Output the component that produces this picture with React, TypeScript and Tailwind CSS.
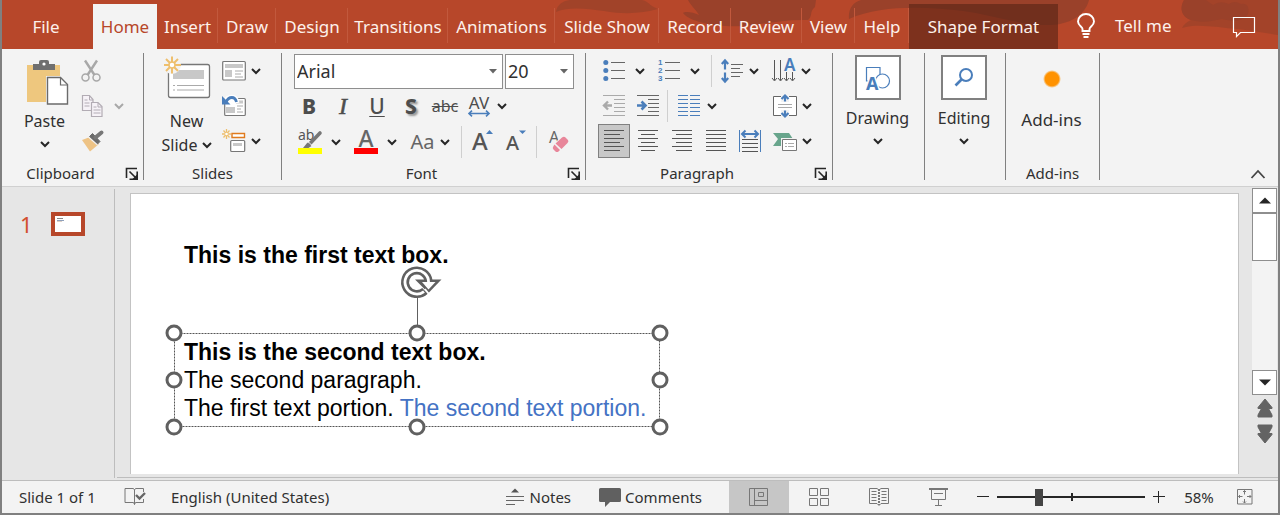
import type { ReactNode } from "react";

const INK = "#262626";
const GREY = "#6b6b6b";
const BLUE = "#4a7ebb";

function Svg({ w, h, children, className = "" }: { w: number; h: number; children: ReactNode; className?: string }) {
  return (
    <svg width={w} height={h} viewBox={`0 0 ${w} ${h}`} fill="none" className={`shrink-0 overflow-visible ${className}`} aria-hidden="true">
      {children}
    </svg>
  );
}

function Chevron({ color = INK, className = "" }: { color?: string; className?: string }) {
  return (
    <Svg w={12} h={10} className={className}>
      <path d="M2 3l4 4 4-4" stroke={color} strokeWidth="2" />
    </Svg>
  );
}

function More({ label, muted = false, className = "" }: { label: string; muted?: boolean; className?: string }) {
  return (
    <button type="button" aria-label={label} className={`shrink-0 ${className}`}>
      <Chevron color={muted ? "#a8a8a8" : INK} />
    </button>
  );
}

function Tool({ label, children, className = "" }: { label: string; children: ReactNode; className?: string }) {
  return (
    <button type="button" aria-label={label} className={`flex shrink-0 items-center justify-center ${className}`}>
      {children}
    </button>
  );
}

function Divider({ className = "" }: { className?: string }) {
  return <span className={`h-8 w-px shrink-0 bg-[#cfcfcf] ${className}`} />;
}

/* ---------- Tab bar ---------- */

const TABS = [
  { name: "Insert", width: "w-[61px]" },
  { name: "Draw", width: "w-[58px]" },
  { name: "Design", width: "w-[72px]" },
  { name: "Transitions", width: "w-[100px]" },
  { name: "Animations", width: "w-[107px]" },
  { name: "Slide Show", width: "w-[104px]" },
  { name: "Record", width: "w-[72px]" },
  { name: "Review", width: "w-[71px]" },
  { name: "View", width: "w-[53px]" },
  { name: "Help", width: "w-[54px]" },
];

function TabBar() {
  return (
    <header className="relative flex h-[49px] shrink-0 items-stretch bg-[#b7472a] text-[17px] text-[#fdf1ec]">
      <svg width="740" height="49" viewBox="540 0 740 49" className="absolute top-0 right-0" fill="#9a412a" aria-hidden="true">
        <path d="M572 0C564 1 559 5 558 12C572 6 590 9 606 11C628 15 645 13 660 9C650 5 652 2 644 0Z" opacity=".75" />
        <path d="M690 0C693 6 699 11 701 15C695 12 687 11 685 13C690 20 708 25 728 26C752 28 778 19 810 20C815 16 811 12 817 7L818 0Z" />
        <path d="M851 19C850 9 855 2 863 0L1091 0C1088 12 1076 24 1053 25C1024 26 995 15 965 11C930 7 884 4 851 19Z" />
        <path d="M1186 0C1181 9 1184 17 1193 20C1189 22 1186 24 1184 28C1200 23 1221 28 1240 29C1255 31 1268 33 1280 35L1280 0Z" opacity=".7" />
        <path d="M1186 0C1181 9 1184 17 1193 20C1206 24 1217 20 1224 19C1244 24 1253 17 1250 7Q1248 3 1243 4Q1236 0 1231 4Q1222 0 1215 5L1208 0Z" />
      </svg>
      <nav className="relative flex items-stretch" aria-label="Ribbon tabs">
        <button type="button" className="w-[91px] pt-[5px] pr-[3px]">File</button>
        <button type="button" className="mt-1 w-16 bg-[#f3f3f3] pt-px text-[#b7472a]">Home</button>
        {TABS.map((t) => (
          <button type="button" key={t.name} className={`${t.width} relative pt-[5px] whitespace-nowrap`}>
            {t.name}
            <span className="absolute top-2 right-0 h-[35px] w-px bg-[#c2593d]" />
          </button>
        ))}
        <button type="button" className="mt-1 w-[149px] bg-[#56231699] pt-px whitespace-nowrap">Shape Format</button>
      </nav>
      <button type="button" className="relative ml-4 flex items-center gap-[17px] pt-[3px] whitespace-nowrap">
        <Svg w={24} h={24}>
          <path d="M8.500 17v-2c0-2-4.500-3.500-4.500-7.500a8 7.500 0 0 1 16 0c0 4-4.500 5.500-4.500 7.500v2zM8.500 20h7M9.500 23h5" stroke="#fff" strokeWidth="1.900" />
        </Svg>
        <span>Tell me</span>
      </button>
      <button type="button" aria-label="Comments pane" className="relative mr-[21px] ml-auto pt-1">
        <Svg w={26} h={22}>
          <path d="M2.500 1.500h21v15h-14l-4 4v-4h-3z" stroke="#fff" strokeWidth="1.200" />
        </Svg>
      </button>
    </header>
  );
}

/* ---------- Ribbon ---------- */

function Group({ label, width, launcher = false, children }: { label?: string; width: string; launcher?: boolean; children: ReactNode }) {
  return (
    <section className={`${width} flex shrink-0 flex-col border-r border-[#808080]`} aria-label={label}>
      <div className="h-[113px]">{children}</div>
      {label && (
        <div className="relative flex h-[14px] items-center justify-center text-[15px] leading-5">
          <span className={launcher ? "pr-6" : ""}>{label}</span>
          {launcher && (
            <button type="button" aria-label={`${label} settings`} className="absolute right-1 bottom-0">
              <Svg w={14} h={13}>
                <path d="M1.500 11V1.500H12" stroke={INK} strokeWidth="1.600" />
                <path d="M12.200 4.500v7.700H4.500M4.500 4.500l6 6" stroke={INK} strokeWidth="1.600" />
                <path d="M12.500 7v5.500H7z" fill={INK} />
              </Svg>
            </button>
          )}
        </div>
      )}
    </section>
  );
}

function Clipboard() {
  return (
    <Group label="Clipboard" width="w-[142px]" launcher>
      <div className="flex h-[107px]">
        <button type="button" className="flex w-[70px] flex-col items-center pl-[15px]">
          <Svg w={44} h={52} className="ml-1">
            <path d="M2 12h33v37H2z" fill="#eec77e" />
            <path d="M8 17v-6h6V9q0-2 2-2h6q2 0 2 2v2h6v6z" fill="#6f6f6f" />
            <circle cx="19" cy="11" r="1.600" fill="#fff" />
            <path d="M21 23h15l9 9v21H21z" fill="#f3f3f3" />
            <path d="M22.500 24.500h13l7 7V51h-20z" fill="#fff" stroke={GREY} strokeWidth="1.400" />
            <path d="M35.500 25v7h7" stroke={GREY} strokeWidth="1.200" />
          </Svg>
          <span className="mt-1 text-[16px] leading-6">Paste</span>
          <Chevron className="mt-[6px]" />
        </button>
        <div className="flex flex-1 flex-col pl-[9px]">
          <Tool label="Cut" className="h-[35px] w-5">
            <Svg w={20} h={24}>
              <path d="M4 1.500l9.500 14.500M16 1.500L6.500 16" stroke="#a8a8a8" strokeWidth="2.400" />
              <circle cx="4.500" cy="18.500" r="3.500" stroke="#a8a8a8" strokeWidth="1.500" />
              <circle cx="15.500" cy="18.500" r="3.500" stroke="#a8a8a8" strokeWidth="1.500" />
            </Svg>
          </Tool>
          <div className="flex h-[35px] items-center gap-[10px]">
            <Tool label="Copy">
              <Svg w={22} h={24}>
                <path d="M1.500 1.500h7l3.500 4v11H1.500z" fill="#f6f2f7" stroke="#b2acb4" strokeWidth="1.200" />
                <path d="M8.500 2v4h3.500M3.500 6h3M3.500 9h5M3.500 12h5" stroke="#b2acb4" />
                <path d="M10.500 8.500h6.500l4 4v10H10.500z" fill="#f6f2f7" stroke="#b2acb4" strokeWidth="1.200" />
                <path d="M17 9v4h4M12.500 13h3M12.500 16h7M12.500 19h7" stroke="#b2acb4" />
              </Svg>
            </Tool>
            <More label="Copy options" muted />
          </div>
          <Tool label="Format Painter" className="h-[35px] w-6">
            <Svg w={24} h={22}>
              <path d="M1 10l8-3 9 7-9 7.500z" fill="#eec385" />
              <path d="M8.500 6.500l3-3 7.500 8-3 3z" fill={GREY} stroke={GREY} />
              <path d="M14.500 7.500l6-5" stroke="#777" strokeWidth="4" strokeLinecap="round" />
              <path d="M7.500 7l9 8" stroke="#f3f3f3" strokeWidth="1.200" />
            </Svg>
          </Tool>
        </div>
      </div>
    </Group>
  );
}

function Slides() {
  return (
    <Group label="Slides" width="w-[138px]">
      <div className="flex h-[107px]">
        <button type="button" className="flex w-[70px] flex-col items-center pl-[15px]">
          <Svg w={48} h={52}>
            <rect x="5.500" y="11.500" width="41" height="33" rx="2" fill="#fff" stroke="#777" strokeWidth="1.300" />
            <rect x="10" y="17" width="31" height="9" fill="#c8c8c8" />
            <path d="M10 32.500h2M14 32.500h27M10 37h2M14 37h27" stroke="#aaa" />
            <circle cx="9" cy="12" r="9" fill="#f3f3f3" />
            <path d="M9 3.500v17M1 12h17M3 6l12 12M15 6L3 18" stroke="#eebf6d" strokeWidth="2" />
            <circle cx="9" cy="12" r="3" fill="#fff" stroke="#eebf6d" strokeWidth="1.500" />
          </Svg>
          <span className="mt-1 text-[16px] leading-6">New</span>
          <span className="flex items-center gap-1 pl-[2px] text-[16px] leading-6">
            Slide <Chevron />
          </span>
        </button>
        <div className="flex flex-1 flex-col pl-2">
          <div className="flex h-[35px] items-center gap-1">
            <Tool label="Layout">
              <Svg w={24} h={22}>
                <rect x=".7" y="1.500" width="22.600" height="18.500" rx="1" fill="#fff" stroke="#777" strokeWidth="1.200" />
                <path d="M3 4h18v4H3zM3 10h7v7H3z" fill="#c8c8c8" />
                <path d="M13 11h8M13 14h6M13 17h8" stroke="#aaa" />
              </Svg>
            </Tool>
            <More label="Layout options" />
          </div>
          <Tool label="Reset" className="h-[35px] w-6">
            <Svg w={24} h={24}>
              <rect x="2.700" y="4.500" width="20.600" height="17" rx="1" fill="#fff" stroke="#777" strokeWidth="1.200" />
              <path d="M14 6.500h7v3h-7zM4 13h9v6H4z" fill="#c8c8c8" />
              <path d="M15 12h6M15 15h4M15 18h6" stroke="#aaa" />
              <path d="M3 8C6 2 14 1 15 9" stroke="#fff" strokeWidth="5" />
              <path d="M4 8C7 2 13 2 14.500 8" stroke={BLUE} strokeWidth="2.800" />
              <path d="M0 2v8.500h8.500z" fill={BLUE} />
            </Svg>
          </Tool>
          <div className="flex h-[35px] items-center gap-1">
            <Tool label="Section">
              <Svg w={24} h={24}>
                <path d="M10 4.500h12.500v4H10z" fill="#fff" stroke="#e07b1f" strokeWidth="1.400" />
                <rect x="8.700" y="11.500" width="14" height="11" rx="1" fill="#fff" stroke="#777" strokeWidth="1.200" />
                <path d="M11 14h9v3h-9z" fill="#c8c8c8" />
                <path d="M4.500 0v10M0 5h9M1.500 1.500l6 7M7.500 1.500l-6 7" stroke="#eebf6d" strokeWidth="1.300" />
                <circle cx="4.500" cy="5" r="1.300" fill="#fff" />
              </Svg>
            </Tool>
            <More label="Section options" />
          </div>
        </div>
      </div>
    </Group>
  );
}

function Picker({ label, value, width }: { label: string; value: string; width: string }) {
  return (
    <div className="relative">
      <select aria-label={label} className={`${width} block h-[35px] appearance-none border border-[#8e8e8e] bg-white pl-[2px] outline-none`} defaultValue={value}>
        <option>{value}</option>
      </select>
      <Svg w={8} h={5} className="pointer-events-none absolute top-[15px] right-[6px]">
        <path d="M0 0h8L4 4.500z" fill="#666" />
      </Svg>
    </div>
  );
}

function Font() {
  return (
    <Group label="Font" width="w-[304px]" launcher>
      <div className="flex gap-[2px] pt-px pl-3 text-[18px]">
        <Picker label="Font name" value="Arial" width="w-[209px]" />
        <Picker label="Font size" value="20" width="w-[69px]" />
      </div>
      <div className="flex h-[34px] items-center pl-[10px] text-[21px] leading-6 text-[#4d4d4d]">
        <Tool label="Bold" className="w-[34px] font-extrabold">B</Tool>
        <Tool label="Italic" className="w-[34px] font-['Liberation_Serif'] text-[24px] italic">
          <span className="[-webkit-text-stroke:0.5px]">I</span>
        </Tool>
        <Tool label="Underline" className="w-[34px] font-medium underline decoration-1 underline-offset-2">U</Tool>
        <Tool label="Text Shadow" className="w-[34px] font-extrabold [text-shadow:2px_2px_2px_#999]">S</Tool>
        <Tool label="Strikethrough" className="w-[34px] text-[16px] line-through">abc</Tool>
        <Tool label="Character Spacing" className="w-[34px] flex-col">
          <span className="text-[17px] leading-[15px]">AV</span>
          <Svg w={22} h={7}>
            <path d="M1 3.500h20M4 .7L1 3.500l3 2.800M18 .7l3 2.800-3 2.800" stroke={BLUE} strokeWidth="1.600" />
          </Svg>
        </Tool>
        <More label="Spacing options" />
      </div>
      <div className="flex h-[37px] items-center pl-4 text-[#666]">
        <Tool label="Text Highlight Color">
          <Svg w={24} h={26}>
            <text x="0" y="11" fontSize="14" fontFamily="Noto Sans" fill="#555">ab</text>
            <path d="M22 4L12 14.500" stroke="#777" strokeWidth="3.600" strokeLinecap="round" />
            <path d="M9.500 13.500l4 3.500-3 2H5z" fill="#777" />
            <path d="M9.500 12l5 5" stroke="#f3f3f3" />
            <path d="M0 19h24v6H0z" fill="#ff0" />
          </Svg>
        </Tool>
        <More label="Highlight options" className="ml-2" />
        <Tool label="Font Color" className="ml-3">
          <Svg w={24} h={26}>
            <text x="12" y="18" fontSize="23" textAnchor="middle" fontFamily="Noto Sans" fontWeight="500" fill="#666">A</text>
            <path d="M0 19h24v6H0z" fill="red" />
          </Svg>
        </Tool>
        <More label="Color options" className="ml-2" />
        <Tool label="Change Case" className="ml-3 w-[25px] text-[20px]">Aa</Tool>
        <More label="Case options" className="ml-1" />
        <Divider className="ml-[10px]" />
        <Tool label="Increase Font Size" className="ml-[10px]">
          <Svg w={22} h={26}>
            <text x="0" y="21" fontSize="24" fontFamily="Noto Sans" fontWeight="500" fill="#555">A</text>
            <path d="M14 5h7l-3.500-4z" fill={BLUE} />
          </Svg>
        </Tool>
        <Tool label="Decrease Font Size" className="ml-3">
          <Svg w={22} h={26}>
            <text x="0" y="21" fontSize="20" fontFamily="Noto Sans" fontWeight="500" fill="#555">A</text>
            <path d="M13 1.500h7L16.500 5z" fill={BLUE} />
          </Svg>
        </Tool>
        <Divider className="ml-[8px]" />
        <Tool label="Clear Formatting" className="ml-3">
          <Svg w={22} h={26}>
            <text x="0" y="14" fontSize="16" fontFamily="Noto Sans" fill="#666">A</text>
            <path d="M3 18L13 6l8 6-10 13z" fill="#f3f3f3" />
            <path d="M6.500 14.500l6.500-6q2-1.500 3.500 0l2.500 2.500q1 1.500-.5 3l-6 6zM5.500 15.500l5.500 5.500-1.500 1.500q-1.500 1-3 0l-2-2q-1.500-1.500 0-3.500z" fill="#e8869a" />
          </Svg>
        </Tool>
      </div>
    </Group>
  );
}

function Lines({ rows, color = "#555" }: { rows: number[][]; color?: string }) {
  return (
    <Svg w={22} h={22}>
      <path d={rows.map(([y, x1, x2]) => `M${x1} ${y}.5H${x2}`).join("")} stroke={color} strokeWidth="1.200" />
    </Svg>
  );
}

function Paragraph() {
  return (
    <Group label="Paragraph" width="w-[247px]" launcher>
      <div className="flex h-9 items-center pl-[17px]">
        <Tool label="Bullets">
          <Svg w={22} h={22}>
            <path d="M8 2.500h14M8 10.500h14M8 18.500h14" stroke="#666" />
            <circle cx="2.800" cy="2.500" r="2.500" fill={BLUE} />
            <circle cx="2.800" cy="10.500" r="2.500" fill={BLUE} />
            <circle cx="2.800" cy="18.500" r="2.500" fill={BLUE} />
          </Svg>
        </Tool>
        <More label="Bullet options" className="ml-[9px]" />
        <Tool label="Numbering" className="ml-3">
          <Svg w={22} h={22}>
            <path d="M7 2.500h15M7 10.500h15M7 18.500h15" stroke="#666" />
            <g fill={BLUE} fontSize="8" fontFamily="Liberation Sans" fontWeight="700">
              <text x="0" y="5">1</text>
              <text x="0" y="13">2</text>
              <text x="0" y="21">3</text>
            </g>
          </Svg>
        </Tool>
        <More label="Numbering options" className="ml-[9px]" />
        <Divider className="ml-[10px]" />
        <Tool label="Line Spacing" className="ml-[9px]">
          <Svg w={22} h={24}>
            <path d="M4 1.500v9M4 13.500v9M.8 5L4 1.500 7.200 5M.8 19L4 22.500 7.200 19" stroke={BLUE} strokeWidth="2.200" />
            <path d="M10 5.500h12M10 9.500h9M10 13.500h12M10 17.500h9" stroke="#666" />
          </Svg>
        </Tool>
        <More label="Spacing options" className="ml-[5px]" />
        <Tool label="Text Direction" className="ml-3">
          <Svg w={24} h={24}>
            <path d="M2.500 1v20M8.500 1v20M14.500 13v8M20.500 13v8M0 19l2.500 3 2.500-3M6 19l2.500 3 2.500-3M12 19l2.500 3 2.500-3M18 19l2.500 3 2.500-3" stroke="#555" />
            <text x="12" y="12" fontSize="17" fontFamily="Noto Sans" fontWeight="600" fill={BLUE}>A</text>
          </Svg>
        </Tool>
        <More label="Direction options" className="ml-1" />
      </div>
      <div className="flex h-[34px] items-center pl-[17px]">
        <Tool label="Decrease Indent">
          <Svg w={22} h={22}>
            <path d="M0 .5h22M11 4.500h11M11 8.500h11M11 12.500h11M11 16.500h11M0 20.500h22" stroke="#aaa" />
            <path d="M9 10.500H1M5 6.500l-4 4 4 4" stroke="#aaa" strokeWidth="2.400" />
          </Svg>
        </Tool>
        <Tool label="Increase Indent" className="ml-3">
          <Svg w={22} h={22}>
            <path d="M0 .5h22M11 4.500h11M11 8.500h11M11 12.500h11M11 16.500h11M0 20.500h22" stroke="#666" />
            <path d="M0 10.500h8M4.500 6.500l4 4-4 4" stroke={BLUE} strokeWidth="2.600" />
          </Svg>
        </Tool>
        <Divider className="ml-2" />
        <Tool label="Columns" className="ml-[10px]">
          <Svg w={22} h={22}>
            <path d="M0 .5h10M12 .5h10M0 4.500h10M12 4.500h10M0 8.500h10M12 8.500h10M0 12.500h10M12 12.500h10M0 16.500h10M12 16.500h10M0 20.500h10M12 20.500h10" stroke={BLUE} />
          </Svg>
        </Tool>
        <More label="Column options" className="ml-[6px]" />
        <Tool label="Align Text" className="ml-[55px]">
          <Svg w={24} h={24}>
            <path d="M.5 2.500h23v19H.500z" fill="#fff" stroke="#666" />
            <path d="M8 0h8v8H8zM8 16h8v8H8z" fill="#f3f3f3" />
            <path d="M5 10.500h14M5 13.500h14" stroke="#aaa" />
            <path d="M12 1.500v6M12 22.500v-6M8.500 5L12 1.500 15.500 5M8.500 19l3.500 3.500 3.500-3.500" stroke={BLUE} strokeWidth="2.200" />
          </Svg>
        </Tool>
        <More label="Align options" className="ml-1" />
      </div>
      <div className="flex h-[35px] items-center pl-[11px]">
        <Tool label="Align Left" className="mr-px ml-px h-[34px] w-8 border border-[#808080] bg-[#c8c8c8]">
          <Lines rows={[[0, 1, 21], [4, 1, 17], [8, 1, 21], [12, 1, 17], [16, 1, 21], [20, 1, 17]]} />
        </Tool>
        <Tool label="Center" className="w-[34px]">
          <Lines rows={[[0, 1, 21], [4, 4, 18], [8, 1, 21], [12, 4, 18], [16, 1, 21], [20, 4, 18]]} />
        </Tool>
        <Tool label="Align Right" className="w-[34px]">
          <Lines rows={[[0, 1, 21], [4, 5, 21], [8, 1, 21], [12, 5, 21], [16, 1, 21], [20, 5, 21]]} />
        </Tool>
        <Tool label="Justify" className="w-[34px]">
          <Lines rows={[[0, 1, 21], [4, 1, 21], [8, 1, 21], [12, 1, 21], [16, 1, 21], [20, 1, 21]]} />
        </Tool>
        <Tool label="Distribute" className="w-[34px]">
          <Svg w={22} h={24}>
            <path d="M.5 1v22M21.500 1v22" stroke={BLUE} />
            <path d="M3 5h16M6.500 1.500L3 5l3.500 3.500M15.500 1.500L19 5l-3.500 3.500" stroke={BLUE} strokeWidth="2" />
            <path d="M3 10.500h16M3 14.500h16M3 18.500h16M3 22.500h16" stroke="#555" />
          </Svg>
        </Tool>
        <Tool label="Convert to SmartArt" className="ml-[6px]">
          <Svg w={24} h={22}>
            <path d="M0 3h16l4 6-4 7H0l5-7z" fill="#68a58c" />
            <path d="M8 8h16v14H8z" fill="#f3f3f3" />
            <path d="M9.500 9.500h14v11h-14z" fill="#fff" stroke="#777" />
            <path d="M12 13.500h2M15 13.500h6M12 16.500h2M15 16.500h6" stroke="#aaa" />
          </Svg>
        </Tool>
        <More label="SmartArt options" className="ml-1" />
      </div>
    </Group>
  );
}

function BigBox({ label, children }: { label: string; children: ReactNode }) {
  return (
    <button type="button" className="flex w-full flex-col items-center pt-[2px] pr-[2px]">
      <span className="flex h-[45px] w-[46px] items-center justify-center border-2 border-[#808080] bg-white">{children}</span>
      <span className="mt-[6px] text-[16px] leading-6">{label}</span>
      <Chevron className="mt-[6px]" />
    </button>
  );
}

function Ribbon() {
  return (
    <div className="flex h-[138px] shrink-0 border-b border-[#d0d0d0] bg-[#f3f3f3] pt-1 pb-[6px] text-[#303030]">
      <Clipboard />
      <Slides />
      <Font />
      <Paragraph />
      <Group width="w-[92px]">
        <BigBox label="Drawing">
          <Svg w={24} h={24}>
            <path d="M.5 15V1.500h13.500V15z" stroke={BLUE} strokeWidth="1.200" />
            <circle cx="16.500" cy="15" r="7" fill="#fff" stroke={BLUE} strokeWidth="1.200" />
            <text x="0" y="24" fontSize="18" fontFamily="Noto Sans" fontWeight="700" fill={BLUE} stroke="#fff" strokeWidth="3" paintOrder="stroke">A</text>
          </Svg>
        </BigBox>
      </Group>
      <Group width="w-[81px]">
        <BigBox label="Editing">
          <Svg w={20} h={22}>
            <circle cx="12" cy="8" r="6" stroke={BLUE} strokeWidth="2" />
            <path d="M7.500 12.500L1.500 18.500" stroke={BLUE} strokeWidth="2.600" />
          </Svg>
        </BigBox>
      </Group>
      <Group label="Add-ins" width="w-[94px]">
        <button type="button" className="flex w-full flex-col items-center pr-[2px]">
          <Svg w={18} h={18} className="mt-[17px]">
            <defs>
              <radialGradient id="dot">
                <stop offset=".75" stopColor="#ff9200" />
                <stop offset="1" stopColor="#ff9200" stopOpacity="0" />
              </radialGradient>
            </defs>
            <circle cx="9" cy="9" r="9" fill="url(#dot)" />
          </Svg>
          <span className="mt-5 text-[17px] leading-6">Add-ins</span>
        </button>
      </Group>
      <button type="button" aria-label="Collapse the Ribbon" className="mr-3 ml-auto self-end">
        <Svg w={16} h={12}>
          <path d="M1.500 10L8 3l6.500 7" stroke="#444" strokeWidth="1.800" />
        </Svg>
      </button>
    </div>
  );
}

/* ---------- Slide ---------- */

const HANDLES = [
  "left-0 top-0",
  "left-1/2 top-0",
  "left-full top-0",
  "left-0 top-1/2",
  "left-full top-1/2",
  "left-0 top-full",
  "left-1/2 top-full",
  "left-full top-full",
];

function Canvas() {
  return (
    <div className="relative flex-1 overflow-hidden border border-b-0 border-[#c3c3c3] bg-white font-['Liberation_Sans',sans-serif] text-[23px] leading-7 text-black">
      <p className="absolute top-[47px] left-[53px] font-bold whitespace-nowrap">This is the first text box.</p>
      <div className="absolute top-[139px] left-[43px] h-[94px] w-[486px] pt-[5px] pl-[10px] whitespace-nowrap">
        <svg className="absolute inset-0 h-full w-full" aria-hidden="true">
          <rect x=".5" y=".5" width="485" height="93" fill="none" stroke="#555" strokeDasharray="2 1" />
        </svg>
        <p className="font-bold">This is the second text box.</p>
        <p>The second paragraph.</p>
        <p>
          The first text portion. <span className="text-[#4472c4]">The second text portion.</span>
        </p>
        <span className="absolute bottom-full left-1/2 h-9 w-px bg-[#606060]" />
        <Svg w={42} h={36} className="absolute bottom-full left-1/2 mb-8 -translate-x-[17px]">
          <path d="M25 25.800A11.800 11.800 0 1 1 28.600 16" stroke="#606060" strokeWidth="8" />
          <path d="M15 14.500h26.500L28.500 28z" fill="#606060" />
          <path d="M24 26.600A11.800 11.800 0 1 1 28.600 17.500" stroke="#fff" strokeWidth="2.800" />
          <path d="M22 17h13.500l-7 7.500z" fill="#fff" />
          <path d="M25 24l4 5" stroke="#fff" strokeWidth="1.500" />
        </Svg>
        {HANDLES.map((place) => (
          <span key={place} className={`${place} absolute size-[17px] -translate-x-1/2 -translate-y-1/2 rounded-full border-3 border-[#606060] bg-white`} />
        ))}
      </div>
    </div>
  );
}

function DoubleArrow({ down = false }: { down?: boolean }) {
  return (
    <Svg w={16} h={20} className={down ? "rotate-180" : ""}>
      <path d="M8 1L15 9.500v1H11.500L15 17v2H1V17L4.500 10.500H1v-1z" fill="#636363" stroke="#636363" strokeLinejoin="round" />
    </Svg>
  );
}

function ScrollBar() {
  return (
    <div className="flex w-[25px] shrink-0 flex-col items-center pt-px pb-[33px]">
      <div className="flex w-full flex-1 flex-col bg-[#f3f3f3]">
        <button type="button" aria-label="Scroll up" className="flex h-[25px] items-center justify-center border border-[#8e8e8e] bg-white">
          <Svg w={12} h={7}><path d="M0 6.500h12L6 .5z" fill={INK} /></Svg>
        </button>
        <div className="h-12 border border-[#8e8e8e] bg-white" />
        <button type="button" aria-label="Scroll down" className="mt-auto flex h-[25px] items-center justify-center border border-[#8e8e8e] bg-white">
          <Svg w={12} h={7}><path d="M0 .5h12L6 6.500z" fill={INK} /></Svg>
        </button>
      </div>
      <button type="button" aria-label="Previous slide" className="mt-[3px] block leading-none"><DoubleArrow /></button>
      <button type="button" aria-label="Next slide" className="mt-[6px] block leading-none"><DoubleArrow down /></button>
    </div>
  );
}

function Workspace() {
  return (
    <main className="flex flex-1 bg-[#e6e6e6]">
      <aside className="mt-[2px] mb-[2px] flex w-[113px] shrink-0 items-start border-r border-[#bdbdbd] pt-[23px] pl-[18px]">
        <span className="w-[31px] text-[22px] leading-6 text-[#d24f2e]">1</span>
        <button type="button" aria-label="Slide 1" className="h-6 w-[34px] border-4 border-[#b7472a] bg-white">
          <Svg w={26} h={16}>
            <path d="M2 2.500h6" stroke="#888" />
            <path d="M2 4.500h7" stroke="#8ea0bb" />
            <path d="M2 5.500h5" stroke="#ddd0c4" />
          </Svg>
        </button>
      </aside>
      <div className="ml-[2px] flex flex-1 flex-col">
        <div className="flex flex-1">
          <div className="flex flex-1 pt-[6px] pr-[13px] pb-[3px] pl-[13px]">
            <Canvas />
          </div>
          <div className="mr-px flex">
            <ScrollBar />
          </div>
        </div>
        <div className="mb-[2px] h-px bg-[#bdbdbd]" />
      </div>
    </main>
  );
}

/* ---------- Status bar ---------- */

function StatusBar() {
  return (
    <footer className="flex h-[33px] shrink-0 items-stretch border-t border-[#bdbdbd] bg-[#f3f3f3] text-[15px] text-[#303030]">
      <span className="flex w-[121px] items-center pl-[17px] whitespace-nowrap">Slide 1 of 1</span>
      <Tool label="Spelling">
        <Svg w={24} h={20}>
          <path d="M11.500 17.500V3l-1-1.500h-8.500v14h8.500l1 2 1-2h8V12M11.500 3l1-1.500h8V5" stroke="#777" />
          <path d="M13 8l3.500 3.500L22 6" stroke="#666" strokeWidth="2.400" />
        </Svg>
      </Tool>
      <button type="button" className="ml-6 whitespace-nowrap">English (United States)</button>
      <div className="ml-auto flex">
        <button type="button" className="flex items-center gap-[6px]">
          <Svg w={18} h={20}>
            <path d="M5 5.500h8L9 1.500z" fill="#555" />
            <path d="M0 9.500h18M0 13.500h18M0 17.500h9" stroke="#666" />
          </Svg>
          Notes
        </button>
        <button type="button" className="ml-[28px] flex items-center gap-1">
          <Svg w={22} h={22}>
            <path d="M1.500 2h19q1.500 0 1.500 1.500v11q0 1.500-1.500 1.500H11l-5 5v-5H1.500Q0 16 0 14.500v-11Q0 2 1.500 2z" fill="#606060" />
          </Svg>
          Comments
        </button>
        <div className="ml-[27px] flex">
          <Tool label="Normal view" className="w-[60px] bg-[#c6c6c6]">
            <Svg w={20} h={20}>
              <path d="M.5 1.500h18v17H.5zM5.500 1.500v17M5.500 13.500h13M9.500 5.500h5v4h-5z" stroke="#777" />
            </Svg>
          </Tool>
          <Tool label="Slide Sorter" className="w-[60px]">
            <Svg w={20} h={20}>
              <path d="M.5 1.500h8v7h-8zM11.500 1.500h8v7h-8zM.5 11.500h8v7h-8zM11.500 11.500h8v7h-8z" stroke="#777" />
            </Svg>
          </Tool>
          <Tool label="Reading View" className="w-[60px]">
            <Svg w={20} h={20}>
              <path d="M.5 1.500H8l2 1.500 2-1.500h7.500v15H12l-2 2-2-2H.5zM2.500 4.500h5M2.500 7.500h5M2.500 10.500h5M2.500 13.500h5M12.500 4.500h5M12.500 7.500h5M12.500 10.500h5M12.500 13.500h5" stroke="#777" />
              <path d="M10 2v16" stroke="#777" strokeWidth="2" strokeDasharray="2 1" />
            </Svg>
          </Tool>
          <Tool label="Slide Show" className="w-[60px]">
            <Svg w={20} h={20}>
              <path d="M0 2h19" stroke="#777" strokeWidth="2" />
              <path d="M2.500 2v10.500h14V2M5 6.500h9M9.500 12.500v6M6 18.500h7" stroke="#777" />
            </Svg>
          </Tool>
        </div>
        <Tool label="Zoom out" className="ml-2">
          <Svg w={12} h={12}><path d="M0 5.500h12" stroke={INK} /></Svg>
        </Tool>
        <div className="relative ml-2 flex items-center">
          <span className="absolute left-1/2 h-2 w-[2px] bg-[#262626]" />
          <input
            type="range"
            aria-label="Zoom"
            defaultValue={27}
            aria-valuetext="58%"
            className="relative h-[17px] w-[148px] appearance-none bg-transparent bg-[linear-gradient(#262626,#262626)] bg-[length:100%_2px] bg-center bg-no-repeat [&::-webkit-slider-thumb]:h-[17px] [&::-webkit-slider-thumb]:w-2 [&::-webkit-slider-thumb]:appearance-none [&::-webkit-slider-thumb]:bg-[#444]"
          />
        </div>
        <Tool label="Zoom in" className="ml-2">
          <Svg w={12} h={12}><path d="M0 5.500h12M5.500 0v12" stroke={INK} /></Svg>
        </Tool>
        <button type="button" className="ml-[18px] w-8">58%</button>
        <Tool label="Fit slide to window" className="mr-[25px] ml-[22px]">
          <Svg w={16} h={16}>
            <path d="M.5 .5h14.500v14.500H.5z" stroke="#777" />
            <path d="M7.500 1.500v4M7.500 10v4M1.500 7.500h4M10 7.500h4M6 3l1.500-1.500L9 3M6 12.500L7.500 14 9 12.500M3 6L1.500 7.500 3 9M12.500 6L14 7.500 12.500 9" stroke="#777" />
          </Svg>
        </Tool>
      </div>
    </footer>
  );
}

export default function App() {
  return (
    <div className="flex min-h-screen flex-col border-x-2 border-b-2 border-[#808080] font-['Noto_Sans',sans-serif]">
      <TabBar />
      <Ribbon />
      <Workspace />
      <StatusBar />
    </div>
  );
}
